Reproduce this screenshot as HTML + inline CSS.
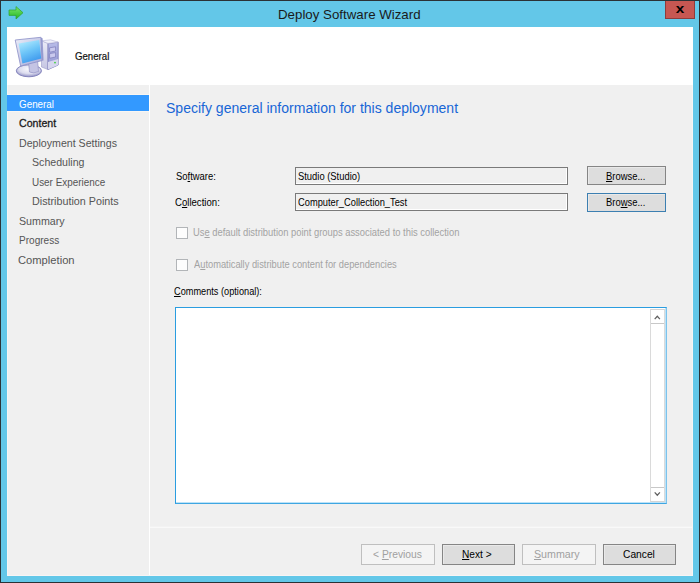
<!DOCTYPE html>
<html><head><meta charset="utf-8">
<style>
*{margin:0;padding:0;box-sizing:border-box}
html,body{width:700px;height:583px;overflow:hidden}
body{position:relative;background:#2b3236;font-family:"Liberation Sans",sans-serif;font-size:11px;color:#000}
.r{position:absolute}
.t{position:absolute;white-space:nowrap;line-height:20px;transform-origin:0 0}
u{text-decoration:underline;text-underline-offset:1px}
.tb{position:absolute;border:1px solid #7a7a7a;background:#f0f0f0;box-shadow:inset -1px -1px 0 #fff}
.btn{position:absolute;border:1px solid #858585;background:#dddddd;box-shadow:inset 1px 1px 0 #e9e9e9}
.btn.dis{border-color:#bfbfbf;background:#f4f4f4;box-shadow:none}
.cb{position:absolute;width:12px;height:12px;border:1px solid #b2b5b8;background:#fdfdfd}
</style></head>
<body>
<div class="r" style="left:1px;top:1px;width:698px;height:581px;background:#63c7e8"></div>
<svg class="r" style="left:8px;top:6px" width="16" height="14" viewBox="0 0 16 14">
  <defs><linearGradient id="ga" x1="0" y1="0" x2="0" y2="1"><stop offset="0" stop-color="#7be86b"/><stop offset="1" stop-color="#23b523"/></linearGradient></defs>
  <path d="M1 4 H8 V0.6 L15 6.7 L8 13 V9.4 H1 Z" fill="url(#ga)" stroke="#2ea12e" stroke-width="0.7"/>
</svg>
<div class="r" style="left:665px;top:1px;width:30px;height:18px;background:#c75752;border:1px solid #8e3c3c;border-top:none"></div>
<div class="t" style="left:675.5px;top:-2.3px;font-size:14.5px;font-weight:bold;color:#000;line-height:20px;transform:scale(1.06,0.9);transform-origin:4px 13px">x</div>

<!-- content -->
<div class="r" style="left:7px;top:27px;width:686px;height:549px;background:#f0f0f0;border:1px solid #f7f5f5;border-top:none"></div>
<div class="r" style="left:7px;top:27px;width:686px;height:58px;background:#fff"></div>
<svg class="r" style="left:10px;top:32px" width="54" height="48" viewBox="0 0 54 48">
  <defs>
    <linearGradient id="scr" x1="0.2" y1="0" x2="0.6" y2="1"><stop offset="0" stop-color="#b4ecff"/><stop offset="0.5" stop-color="#6cc4f8"/><stop offset="1" stop-color="#3b96ec"/></linearGradient>
    <linearGradient id="twl" x1="0" y1="0" x2="0" y2="1"><stop offset="0" stop-color="#ececf8"/><stop offset="1" stop-color="#c4c4e2"/></linearGradient>
    <linearGradient id="twr" x1="0" y1="0" x2="0" y2="1"><stop offset="0" stop-color="#b8bce8"/><stop offset="1" stop-color="#9094d0"/></linearGradient>
    <radialGradient id="bs" cx="0.5" cy="0.35" r="0.65"><stop offset="0" stop-color="#fafafe"/><stop offset="0.6" stop-color="#dcdcee"/><stop offset="1" stop-color="#9090c4"/></radialGradient>
    <linearGradient id="bz" x1="0" y1="0" x2="1" y2="1"><stop offset="0" stop-color="#eceef8"/><stop offset="1" stop-color="#a4a8d8"/></linearGradient>
  </defs>
  <ellipse cx="18.9" cy="38.8" rx="12.6" ry="6" fill="url(#bs)" stroke="#7c7cb8" stroke-width="0.9"/>
  <path d="M31.5 8.8 L38 11.4 L38 37.6 L31.5 35 Z" fill="url(#twl)" stroke="#9c9cc8" stroke-width="0.6"/>
  <path d="M38 11.4 L48.2 10.2 L48.2 33 L38 37.6 Z" fill="url(#twr)" stroke="#7474b4" stroke-width="0.8"/>
  <path d="M31.5 8.8 L40.5 7.8 L48.2 10.2 L38 11.4 Z" fill="#f0f0fa" stroke="#a8a8d0" stroke-width="0.5"/>
  <path d="M38 30 L48.2 27 L48.2 33 L38 37.6 Z" fill="#d6d6ee"/>
  <path d="M39.6 15.8 L45.6 14.8 L45.6 19 L39.6 20.2 Z" fill="#cacaee" stroke="#7070b0" stroke-width="0.6"/>
  <path d="M39.6 21.6 L45.6 20.6 L45.6 25 L39.6 26.2 Z" fill="#cacaee" stroke="#7070b0" stroke-width="0.6"/>
  <circle cx="45" cy="30.6" r="0.9" fill="#3ad23a"/>
  <path d="M18.5 30 L27.5 27.5 L28.5 39.5 Q23.5 42 19.5 40 Z" fill="#c4c4e4" stroke="#8a8ac0" stroke-width="0.6"/>
  <path d="M30.9 5.4 L32.6 6.2 L33.6 28.6 L32 28.6 Z" fill="#9a9ed2"/>
  <path d="M5.2 8 L30.9 5.3 L32.1 28.6 L10.6 33.9 Z" fill="url(#bz)" stroke="#8a8ec6" stroke-width="0.8"/>
  <path d="M8.6 11.4 L29.2 7.9 L31.2 26.4 L12.4 31.6 Z" fill="url(#scr)"/>
</svg>

<div class="r" style="left:7px;top:94px;width:142px;height:1px;background:#f9f6f2"></div>
<div class="r" style="left:7px;top:111px;width:142px;height:1px;background:#f9f6f2"></div>
<div class="r" style="left:7px;top:95px;width:142px;height:16px;background:#3399ff"></div>
<div class="r" style="left:149px;top:85px;width:1px;height:490px;background:#ffffff"></div>

<div class="tb" style="left:295px;top:167px;width:273px;height:18px"></div>
<div class="tb" style="left:295px;top:193px;width:273px;height:18px"></div>
<div class="btn" style="left:587px;top:166px;width:79px;height:19px"></div>
<div class="btn" style="left:587px;top:193px;width:79px;height:19px;border-color:#3c7fb1"></div>

<div class="cb" style="left:176px;top:227px"></div>
<div class="cb" style="left:176px;top:259px"></div>

<div class="r" style="left:175px;top:307px;width:492px;height:197px;background:#fff;border:1px solid #2a9de0;border-right-color:#7cc3ec;border-bottom-color:#3ea6e2;box-shadow:inset -1px -1px 0 #bde2f7"></div>
<div class="r" style="left:650px;top:309px;width:15px;height:193px;background:#fff;border-left:1px solid #dadada;border-right:1px solid #dadada;border-top:1px solid #d4d4d4;border-bottom:1px solid #d4d4d4"></div>
<div class="r" style="left:651px;top:323px;width:13px;height:1px;background:#c8c8c8"></div>
<div class="r" style="left:651px;top:487px;width:13px;height:1px;background:#c8c8c8"></div>
<svg class="r" style="left:651px;top:310px" width="13" height="13" viewBox="0 0 13 13"><path d="M3.7 9.2 L6.3 6.3 L8.9 9.2" fill="none" stroke="#606060" stroke-width="1.25"/></svg>
<svg class="r" style="left:651px;top:488px" width="13" height="13" viewBox="0 0 13 13"><path d="M3.7 4.3 L6.3 7.2 L8.9 4.3" fill="none" stroke="#606060" stroke-width="1.25"/></svg>

<div class="r" style="left:150px;top:526px;width:542px;height:1px;background:#f3f3f3"></div>
<div class="r" style="left:150px;top:527px;width:542px;height:1px;background:#f9f9f9"></div>
<div class="btn dis" style="left:361px;top:544px;width:74px;height:21px"></div>
<div class="btn" style="left:442px;top:544px;width:73px;height:21px"></div>
<div class="btn dis" style="left:522px;top:544px;width:74px;height:21px"></div>
<div class="btn" style="left:603px;top:544px;width:73px;height:21px"></div>

<div class="t" style="left:277.88px;top:5px;font-size:13px;font-weight:normal;color:#1a1a1a;transform:scaleX(1.0225)">Deploy Software Wizard</div>
<div class="t" style="left:74.80px;top:46px;font-size:11px;font-weight:normal;-webkit-text-stroke:0.2px #111;color:#111111;transform:scaleX(0.8769)">General</div>
<div class="t" style="left:166.00px;top:98px;font-size:14px;font-weight:normal;color:#1866d6;transform:scaleX(1.0007)">Specify general information for this deployment</div>
<div class="t" style="left:19.10px;top:94px;font-size:11px;font-weight:normal;color:#ffffff;transform:scaleX(0.8949)">General</div>
<div class="t" style="left:19.00px;top:113px;font-size:11px;font-weight:normal;-webkit-text-stroke:0.3px #1a1a1a;color:#1a1a1a;transform:scaleX(0.9641)">Content</div>
<div class="t" style="left:18.54px;top:133px;font-size:11px;font-weight:normal;color:#555555;transform:scaleX(0.9650)">Deployment Settings</div>
<div class="t" style="left:32.04px;top:152px;font-size:11px;font-weight:normal;color:#555555;transform:scaleX(0.9642)">Scheduling</div>
<div class="t" style="left:32.10px;top:172px;font-size:11px;font-weight:normal;color:#555555;transform:scaleX(0.9000)">User Experience</div>
<div class="t" style="left:32.02px;top:191px;font-size:11px;font-weight:normal;color:#555555;transform:scaleX(0.9773)">Distribution Points</div>
<div class="t" style="left:18.53px;top:211px;font-size:11px;font-weight:normal;color:#555555;transform:scaleX(0.9696)">Summary</div>
<div class="t" style="left:18.59px;top:230px;font-size:11px;font-weight:normal;color:#555555;transform:scaleX(0.9140)">Progress</div>
<div class="t" style="left:18.48px;top:250px;font-size:11px;font-weight:normal;color:#555555;transform:scaleX(1.0167)">Completion</div>
<div class="t" style="left:175.64px;top:166px;font-size:11px;font-weight:normal;color:#000000;transform:scaleX(0.8578)">So<u>f</u>tware:</div>
<div class="t" style="left:174.73px;top:192px;font-size:11px;font-weight:normal;color:#000000;transform:scaleX(0.8720)">C<u>o</u>llection:</div>
<div class="t" style="left:297.55px;top:166px;font-size:11px;font-weight:normal;color:#000000;transform:scaleX(0.8535)">Studio (Studio)</div>
<div class="t" style="left:297.55px;top:192px;font-size:11px;font-weight:normal;color:#000000;transform:scaleX(0.8453)">Computer_Collection_Test</div>
<div class="t" style="left:606.04px;top:166px;font-size:11px;font-weight:normal;color:#000000;transform:scaleX(0.8568)"><u>B</u>rowse...</div>
<div class="t" style="left:606.04px;top:192px;font-size:11px;font-weight:normal;color:#000000;transform:scaleX(0.8568)">Bro<u>w</u>se...</div>
<div class="t" style="left:192.65px;top:222px;font-size:11px;font-weight:normal;color:#a3a3a3;transform:scaleX(0.8524)">Us<u>e</u> default distribution point groups associated to this collection</div>
<div class="t" style="left:193.50px;top:254px;font-size:11px;font-weight:normal;color:#a3a3a3;transform:scaleX(0.8458)">A<u>u</u>tomatically distribute content for dependencies</div>
<div class="t" style="left:173.96px;top:281px;font-size:11px;font-weight:normal;color:#000000;transform:scaleX(0.8359)"><u>C</u>omments (optional):</div>
<div class="t" style="left:373.00px;top:544px;font-size:11px;font-weight:normal;color:#a0a0a0;transform:scaleX(0.9365)">&lt; <u>P</u>revious</div>
<div class="t" style="left:462.38px;top:544px;font-size:11px;font-weight:normal;color:#000000;transform:scaleX(0.9226)"><u>N</u>ext &gt;</div>
<div class="t" style="left:534.43px;top:544px;font-size:11px;font-weight:normal;color:#a0a0a0;transform:scaleX(0.9696)"><u>S</u>ummary</div>
<div class="t" style="left:622.97px;top:544px;font-size:11px;font-weight:normal;color:#000000;transform:scaleX(0.9303)">Cancel</div>
</body></html>
